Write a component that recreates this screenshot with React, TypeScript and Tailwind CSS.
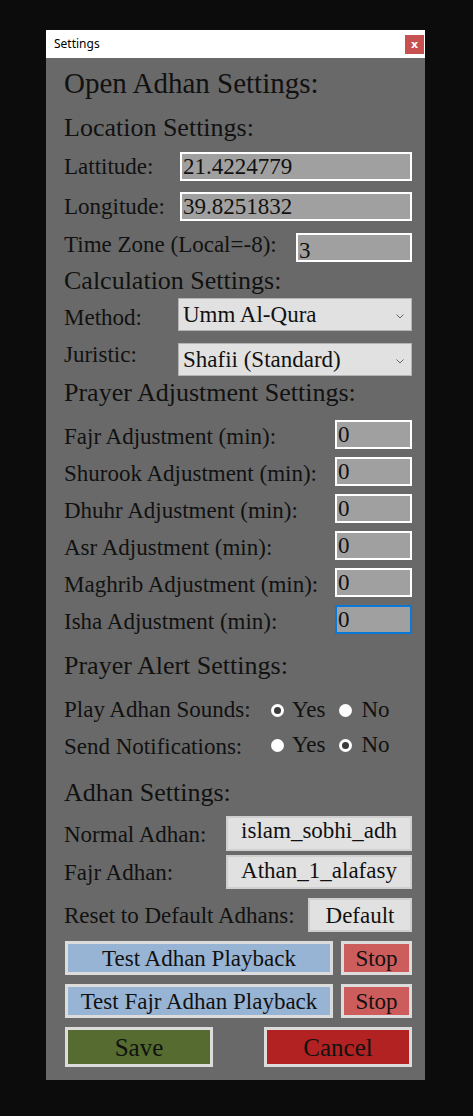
import React from "react";

const serif = { fontFamily: '"Liberation Serif", "Times New Roman", serif' };

function Heading({ children, className = "" }: { children: React.ReactNode; className?: string }) {
  return <div className={`text-[26px] leading-[30px] text-[#111] ${className}`}>{children}</div>;
}

function TextBox({ value, className = "", focused = false, textClass = "" }: { value: string; className?: string; focused?: boolean; textClass?: string }) {
  return (
    <div
      className={`h-[29px] border-2 bg-[#a0a0a0] pl-[1px] text-[23px] leading-[25px] text-[#111] ${
        focused ? "border-[#0a78d7]" : "border-white"
      } ${className}`}
    >
      <div className={textClass}>{value}</div>
    </div>
  );
}

function Select({ value }: { value: string }) {
  return (
    <div className="flex h-[33px] w-[234px] items-center justify-between border border-[#b4b4b4] bg-[#e1e1e1] pl-[4px] pr-[7px]">
      <span className="text-[23px] leading-[31px] text-[#111]">{value}</span>
      <svg width="8" height="5" viewBox="0 0 8 5" className="mt-[3px]">
        <path d="M0.5 0.5 L4 4 L7.5 0.5" fill="none" stroke="#666" strokeWidth="1" />
      </svg>
    </div>
  );
}

function Radio({ checked }: { checked?: boolean }) {
  return (
    <span className="flex h-[13px] w-[13px] items-center justify-center rounded-full bg-white">
      {checked && <span className="h-[7px] w-[7px] rounded-full bg-[#3a3a3a]" />}
    </span>
  );
}

function RadioGroup({ yes, shift = "" }: { yes: boolean; shift?: string }) {
  return (
    <div className={`flex shrink-0 items-start ${shift}`}>
      <span className="mt-[6px]">
        <Radio checked={yes} />
      </span>
      <span className="ml-[8px] leading-[23px]">Yes</span>
      <span className="ml-[14px] mt-[6px]">
        <Radio checked={!yes} />
      </span>
      <span className="ml-[9px] leading-[23px]">No</span>
    </div>
  );
}

function Adjust({ label, focused }: { label: string; focused?: boolean }) {
  return (
    <div className="mt-[8px] flex items-start justify-between first:mt-[12px]">
      <span className="pt-[5px] leading-[23px]">{label}</span>
      <TextBox value="0" className="w-[77px]" focused={focused} />
    </div>
  );
}

function Btn({ children, className = "", bg }: { children: React.ReactNode; className?: string; bg: string }) {
  return (
    <button className={`flex items-center justify-center border-[3px] border-[#dcdcdc] text-[23px] leading-[23px] text-[#111] ${bg} ${className}`}>
      {children}
    </button>
  );
}

export default function App() {
  const adjustments = [
    "Fajr Adjustment (min):",
    "Shurook Adjustment (min):",
    "Dhuhr Adjustment (min):",
    "Asr Adjustment (min):",
    "Maghrib Adjustment (min):",
    "Isha Adjustment (min):",
  ];

  return (
    <div className="h-[1116px] w-[473px] overflow-hidden bg-[#0c0c0c] pt-[30px]">
      <div className="ml-[46px] h-[1050px] w-[379px] bg-[#696969]">
        {/* Title bar */}
        <div className="flex h-[28px] items-center justify-between bg-white pl-[8px] pr-[1px]">
          <span className="text-[12px] text-black" style={{ fontFamily: '"Noto Sans", sans-serif' }}>
            Settings
          </span>
          <span className="flex h-[19px] w-[19px] items-center justify-center bg-[#c75050] text-[11px] font-bold leading-none text-white" style={{ fontFamily: '"DejaVu Sans", sans-serif' }}>
            x
          </span>
        </div>

        <div className="pl-[18px] pr-[13px] text-[23px] text-[#111]" style={serif}>
          <div className="mt-[8px] text-[29px] leading-[34px]">Open Adhan Settings:</div>

          {/* Location */}
          <Heading className="mt-[13px]">Location Settings:</Heading>
          <div className="mt-[9px] flex items-start">
            <span className="w-[116px] leading-[29px]">Lattitude:</span>
            <TextBox value="21.4224779" className="flex-1" />
          </div>
          <div className="mt-[11px] flex items-start">
            <span className="w-[116px] leading-[29px]">Longitude:</span>
            <TextBox value="39.8251832" className="flex-1" />
          </div>
          <div className="mt-[12px] flex items-start justify-between">
            <span className="leading-[23px]">Time Zone (Local=-8):</span>
            <TextBox value="3" className="w-[116px]" textClass="pt-[3px]" />
          </div>

          {/* Calculation */}
          <Heading className="mt-[4px]">Calculation Settings:</Heading>
          <div className="mt-[2px] flex items-start justify-between">
            <span className="pt-[8px] leading-[23px]">Method:</span>
            <Select value="Umm Al-Qura" />
          </div>
          <div className="mt-[12px] flex items-start justify-between">
            <span className="leading-[23px]">Juristic:</span>
            <Select value="Shafii (Standard)" />
          </div>

          {/* Adjustments */}
          <Heading className="mt-[2px]">Prayer Adjustment Settings:</Heading>
          <div>
            {adjustments.map((a, i) => (
              <Adjust key={a} label={a} focused={i === adjustments.length - 1} />
            ))}
          </div>

          {/* Alerts */}
          <Heading className="mt-[17px]">Prayer Alert Settings:</Heading>
          <div className="mt-[17px] flex items-start">
            <span className="w-[207px] shrink-0 whitespace-nowrap leading-[23px]">Play Adhan Sounds:</span>
            <RadioGroup yes={true} />
          </div>
          <div className="mt-[14px] flex items-start">
            <span className="w-[207px] shrink-0 whitespace-nowrap leading-[23px]">Send Notifications:</span>
            <RadioGroup yes={false} shift="-mt-[2px]" />
          </div>

          {/* Adhan files */}
          <Heading className="mt-[20px]">Adhan Settings:</Heading>
          <div className="mt-[8px] flex items-start justify-between">
            <span className="pt-[7px] leading-[23px]">Normal Adhan:</span>
            <button className="flex h-[35px] w-[186px] items-center justify-center border-2 border-[#cfcfcf] bg-[#e1e1e1] pb-[6px] leading-[23px] text-[#111]">
              islam_sobhi_adh
            </button>
          </div>
          <div className="mt-[4px] flex items-start justify-between">
            <span className="pt-[6px] leading-[23px]">Fajr Adhan:</span>
            <button className="flex h-[34px] w-[186px] items-center justify-center border-2 border-[#cfcfcf] bg-[#e1e1e1] pb-[3px] leading-[23px] text-[#111]">
              Athan_1_alafasy
            </button>
          </div>
          <div className="mt-[9px] flex items-start justify-between">
            <span className="pt-[6px] leading-[23px]">Reset to Default Adhans:</span>
            <button className="flex h-[34px] w-[104px] items-center justify-center border-2 border-[#cfcfcf] bg-[#e1e1e1] leading-[23px] text-[#111]">
              Default
            </button>
          </div>

          {/* Playback */}
          <div className="mt-[9px] flex justify-between pl-[1px]">
            <Btn bg="bg-[#98b4d4]" className="h-[34px] w-[268px]">Test Adhan Playback</Btn>
            <Btn bg="bg-[#cd5c5c]" className="h-[34px] w-[71px]">Stop</Btn>
          </div>
          <div className="mt-[9px] flex justify-between pl-[1px]">
            <Btn bg="bg-[#98b4d4]" className="h-[34px] w-[268px]">Test Fajr Adhan Playback</Btn>
            <Btn bg="bg-[#cd5c5c]" className="h-[34px] w-[71px]">Stop</Btn>
          </div>
          <div className="mt-[9px] flex justify-between pl-[1px]">
            <Btn bg="bg-[#556b2f]" className="h-[40px] w-[148px] text-[25px]">Save</Btn>
            <Btn bg="bg-[#b22222]" className="h-[40px] w-[148px] text-[25px]">Cancel</Btn>
          </div>
        </div>
      </div>
    </div>
  );
}
